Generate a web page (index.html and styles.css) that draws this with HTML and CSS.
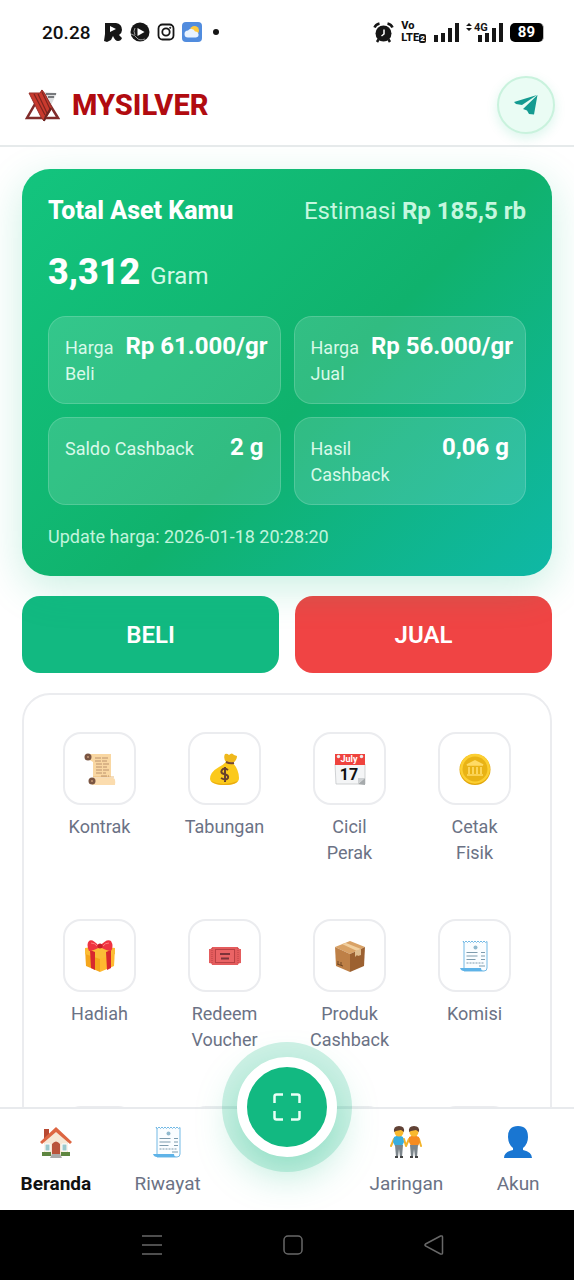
FILE: index.html
```html
<!DOCTYPE html>
<html lang="id">
<head>
  <meta charset="UTF-8" />
  <meta name="viewport" content="width=device-width, initial-scale=1.0" />
  <title>MYSILVER</title>
  <link rel="stylesheet" href="styles.css">
</head>
<body>
  <svg class="defs" aria-hidden="true">
    <symbol id="receipt" viewBox="0 0 32 32">
      <path d="M4 1l1.500 1.500L7 1l1.500 1.500L10 1l1.500 1.500L13 1l1.500 1.500L16 1l1.500 1.500L19 1l1.500 1.500L22 1l1.500 1.500L25 1l1.500 1.500L28 1.500V28q0 3-3 3H5V3z" fill="#fafdff" stroke="#72b9e5" stroke-width="1"/>
      <path d="M1 28h21q0 3 3 3H5q-3 0-4-3z" fill="#5eb3e8"/>
      <circle cx="16.500" cy="7.500" r="2" fill="#90b9ce"/>
      <path d="M7.500 12.500h11M7.500 16h11M7.500 19.500h9M22 12.500h4M22 16h4M22 19.500h4M20 26h6" stroke="#7d9bad" stroke-width="1"/>
      <path d="M7.500 23h18" stroke="#7d9bad" stroke-width="1" stroke-dasharray="2 1"/>
    </symbol>
  </svg>

  <div class="app">
    <div class="status-bar">
      <div class="status-left">
        <span class="clock">20.28</span>
        <svg width="20" height="20" viewBox="0 0 20 20"><path d="M2 1h11q6 1 6 7 0 3-3 5l3 3q-1 3-4 3-3 0-5-5l-2 4-4 2-3-1 1-7z" fill="#161616"/><path d="M7 4l6 3-6 3z" fill="#fff"/></svg>
        <svg width="20" height="20" viewBox="0 0 20 20"><circle cx="10" cy="10" r="9.500" fill="#161616"/><path d="M7.500 6l7 4-7 4z" fill="#fff"/><path d="M1 12q4 1 6 4t8 1M5 6q-2 3 0 7" fill="none" stroke="#999"/></svg>
        <svg width="18" height="18" viewBox="0 0 18 18" fill="none" stroke="#161616" stroke-width="1.800"><rect x="1.500" y="1.500" width="15" height="15" rx="4"/><circle cx="9" cy="9" r="3.700"/><circle cx="13.200" cy="4.800" r=".6" fill="#161616" stroke-width="1"/></svg>
        <svg width="20" height="20" viewBox="0 0 20 20"><rect width="20" height="20" rx="4" fill="#518cde"/><circle cx="12.500" cy="8.500" r="4.500" fill="#ffc93c"/><path d="M6 15.500a3.500 3.500 0 0 1 0-7 4 4 0 0 1 7 1 3 3 0 0 1 1 6z" fill="#e9f3ff"/></svg>
        <span class="dot"></span>
      </div>
      <div class="status-right">
        <svg width="21" height="21" viewBox="0 0 21 21"><circle cx="10.500" cy="11.500" r="8" fill="#161616"/><path d="M1.500 5.500q1-3 5-4M19.500 5.500q-1-3-5-4M5.500 17.500L4 20M15.500 17.500l1.500 2.500" fill="none" stroke="#161616" stroke-width="2.500"/><path d="M11 7.500v4.500l-2.500 2" fill="none" stroke="#fff" stroke-width="1.500"/></svg>
        <span class="volte"><span>Vo</span><span>LTE<b>2</b></span></span>
        <svg width="26" height="21" viewBox="0 0 26 21" fill="#161616"><path d="M1 13h4v7H1zM8 11h4v9H8zM15 6h4v14h-4zM22 1h4v19h-4z"/></svg>
        <svg width="37" height="21" viewBox="0 0 37 21" fill="#161616"><path d="M0 4l3-3 3 3zM0 6l3 3 3-3z"/><text class="net" x="8" y="9">4G</text><path d="M12 13h4v7h-4zM19 11h4v9h-4zM26 6h4v14h-4zM33 1h4v19h-4z"/></svg>
        <span class="battery">89</span>
      </div>
    </div>

    <header class="topbar">
      <a class="brand" href="#">
        <svg width="36" height="36" viewBox="0 0 36 36">
          <path d="M19 5l14 1-6 12-6-4z" fill="#dedfe0"/>
          <path d="M22 7h10M24 10h6" stroke="#56585b" stroke-width="1.500"/>
          <path d="M18 5L34 31H3z" fill="none" stroke="#812c2b" stroke-width="2.500"/>
          <path d="M5 6h11l2-3 3 4 7 14-8 13-3-4z" fill="#c93a2e" stroke="#96302a"/>
          <path d="M10 7l11 21M14 7l9 19M18 5l8 17" stroke="#7d241f" stroke-width="1.200"/>
          <path d="M20 34l2-5 5-8" fill="none" stroke="#6b2522" stroke-width="2"/>
        </svg>
        <span>MYSILVER</span>
      </a>
      <button class="send-btn" aria-label="Telegram">
        <svg width="24" height="20" viewBox="0 0 24 20"><path d="M23 0L0 7l2 2 6 1z" fill="#159b91"/><path d="M23.500 0L9 14l4 1.500 2 3.500 5 .5z" fill="#159b91"/></svg>
      </button>
    </header>

    <main class="content">
      <section class="asset-card">
        <div class="asset-head">
          <h1>Total Aset Kamu</h1>
          <span class="estimate">Estimasi <b>Rp 185,5 rb</b></span>
        </div>
        <div class="balance"><strong>3,312</strong><span>Gram</span></div>
        <div class="price-grid">
          <div class="price-box"><span>Harga Beli</span><b>Rp 61.000/gr</b></div>
          <div class="price-box"><span>Harga Jual</span><b>Rp 56.000/gr</b></div>
          <div class="price-box"><span>Saldo Cashback</span><b>2 g</b></div>
          <div class="price-box"><span>Hasil Cashback</span><b>0,06 g</b></div>
        </div>
        <p class="updated">Update harga: 2026-01-18 20:28:20</p>
      </section>

      <div class="actions">
        <button class="btn buy">BELI</button>
        <button class="btn sell">JUAL</button>
      </div>

      <section class="menu">
        <a class="menu-item" href="#">
          <span class="tile">
            <svg viewBox="0 0 32 32"><path d="M4 1h23v23H9V9L4 6z" fill="#f9d7a2"/><path d="M8 25h21q3 0 2 7H8z" fill="#fbdcae"/><path d="M9 24h21" stroke="#e9b979"/><circle cx="4" cy="4" r="3.500" fill="#7a5542"/><circle cx="8" cy="28" r="3.500" fill="#7a5542"/><circle cx="4" cy="4" r="1" fill="#c59876"/><circle cx="8" cy="28" r="1" fill="#c59876"/><path d="M11 5h13M11 8h12M12 11h13M12 14h11M12 17h13M12 20h10M17 23h8" stroke="#ad8060" stroke-width=".8" stroke-dasharray="6 1"/></svg>
          </span>
          <span>Kontrak</span>
        </a>
        <a class="menu-item" href="#">
          <span class="tile">
            <svg viewBox="0 0 32 32"><path d="M17 9q-3-4-1-8 2-1 4 1 3-3 5 0l3 1q0 4-4 7z" fill="#efb81b"/><path d="M17 9q4 3 7 1 6 7 6 15 0 7-14 7T1 26q0-7 9-12 4-2 7-5z" fill="#fbc91c"/><path d="M2 28q12 6 27 0-3 4-13 4T2 28z" fill="#e9aa12"/><path d="M17 9q4 2 8 1" stroke="#704537" stroke-width="2" fill="none"/><path d="M19 17q-4-3-6 0-2 3 2 4 5 1 4 4-2 3-7 0M16 14v15" stroke="#67402d" stroke-width="2" fill="none"/></svg>
          </span>
          <span>Tabungan</span>
        </a>
        <a class="menu-item" href="#">
          <span class="tile">
            <svg viewBox="0 0 32 32"><path d="M1 11h30v20H2z" fill="#f4f5f6" stroke="#c5c8ca" stroke-width=".8"/><path d="M24 31l7-6v7z" fill="#a6aaac"/><path d="M24 31v-6h7z" fill="#ced1d3"/><path d="M1 1h30v11H1z" fill="#ef433e"/><circle cx="4.500" cy="3.500" r="1.700" fill="#eee"/><circle cx="27.500" cy="3.500" r="1.700" fill="#eee"/><text class="cal-month" x="15" y="9">July</text><text class="cal-day" x="15" y="27">17</text></svg>
          </span>
          <span>Cicil Perak</span>
        </a>
        <a class="menu-item" href="#">
          <span class="tile">
            <svg viewBox="0 0 32 32"><circle cx="16" cy="16.500" r="15.500" fill="#e2a70b"/><circle cx="16" cy="15.700" r="15" fill="#fccf32"/><circle cx="16" cy="16" r="12.500" fill="#e9b315"/><path d="M8 12l8-4 8 4zM8 22h16M10 14v7M14 14v7M18 14v7M22 14v7" fill="#ffdb65" stroke="#ffdb65" stroke-width="1.700"/></svg>
          </span>
          <span>Cetak Fisik</span>
        </a>
        <a class="menu-item" href="#">
          <span class="tile">
            <svg viewBox="0 0 32 32"><path d="M1 9l15 4v19L2 26z" fill="#f5a61c"/><path d="M16 13l15-4-1 17-14 6z" fill="#ffb92f"/><path d="M1 8l14-2 16 2v6l-15 5L1 14z" fill="#fbbd36"/><path d="M6 10l5 2v18l-4-2zM22 12l5-2v18l-4 2z" fill="#d8282e"/><path d="M15 6Q8-2 5 1t0 10q4 0 11-4 7 4 11 4 3-5 0-10-4-3-11 5z" fill="#ef3340"/><circle cx="16" cy="6" r="2.500" fill="#c71e2a"/><path d="M7 3q4 0 6 3M25 3q-4 0-6 3" fill="none" stroke="#ff7b7d"/></svg>
          </span>
          <span>Hadiah</span>
        </a>
        <a class="menu-item" href="#">
          <span class="tile">
            <svg viewBox="0 0 32 32"><path d="M3 7h26q0 2 3 2v14q-3 0-3 2H3q0-2-3-2V9q3 0 3-2z" fill="#e45c5d"/><rect x="6.500" y="9.500" width="19" height="13" fill="#ea6465" stroke="#b94144"/><path d="M3 8v16M29 8v16" stroke="#ba4245" stroke-dasharray="1 1"/><path d="M11 14h10M12 18.500h8" stroke="#7d3339" stroke-width="2"/></svg>
          </span>
          <span>Redeem Voucher</span>
        </a>
        <a class="menu-item" href="#">
          <span class="tile">
            <svg viewBox="0 0 32 32"><path d="M1 7l15-6 15 6-15 7z" fill="#d9a266"/><path d="M1 7l15 7v18L2 26z" fill="#be8047"/><path d="M16 14l15-7-1 19-14 6z" fill="#9c6131"/><path d="M8 4l15 7 4-2-15-6z" fill="#f1cf9e"/><path d="M21 11l6-2v6l-3 1-1-1-2 2z" fill="#dfbd8f"/><path d="M4 21v3M7 22v3M3 24l6 2" stroke="#704624"/></svg>
          </span>
          <span>Produk Cashback</span>
        </a>
        <a class="menu-item" href="#">
          <span class="tile"><svg><use href="#receipt"/></svg></span>
          <span>Komisi</span>
        </a>
        <span class="menu-item"><span class="tile"></span></span>
        <span class="menu-item"><span class="tile"></span></span>
        <span class="menu-item"><span class="tile"></span></span>
        <span class="menu-item"><span class="tile"></span></span>
      </section>
    </main>

    <nav class="bottom-nav">
      <a class="nav-item active" href="#">
        <svg viewBox="0 0 32 32"><path d="M4 3h5v12H4z" fill="#b84932"/><path d="M4 14L16 4l12 10v16H4z" fill="#f6e7d5"/><path d="M0 16L16 1l16 15-2 2L16 6 2 18z" fill="#dd6642"/><path d="M5 18h5v7H5zM22 18h5v7h-5z" fill="#9cc8cc" stroke="#fff"/><path d="M12 29V18q4-5 8 0v11z" fill="#b9543c"/><path d="M2 26h9v4H2zM21 26h9v4h-9z" fill="#5e8640"/><path d="M12 28h8l2 4H10z" fill="#aaa"/></svg>
        <span>Beranda</span>
      </a>
      <a class="nav-item" href="#">
        <svg><use href="#receipt"/></svg>
        <span>Riwayat</span>
      </a>
      <button class="scan-btn" aria-label="Scan">
        <svg width="28" height="28" viewBox="0 0 28 28" fill="none" stroke="#e9fff6" stroke-width="2.500"><path d="M1.500 10V3.500q0-2 2-2H10M18 1.500h6.500q2 0 2 2V10M26.500 18v6.500q0 2-2 2H18M10 26.500H3.500q-2 0-2-2V18"/></svg>
      </button>
      <a class="nav-item" href="#">
        <svg viewBox="0 0 32 32"><path d="M4 13L1 20M14 13l2 7M19 13l-3 7M29 13l2 7" stroke="#f3b42b" stroke-width="2" stroke-linecap="round"/><path d="M4 11q5-3 9 0l1 5-2 4H5l-2-4z" fill="#38aedf"/><path d="M19 11q5-3 10 0l1 5-2 4h-7l-2-4z" fill="#f68b20"/><path d="M5 19h8l-1 12h-2l-1-8-1 8H6zM20 19h8l-1 12h-2l-1-8-1 8h-2z" fill="#7c858b"/><path d="M5 31h3M10 31h3M20 31h3M25 31h3" stroke="#444" stroke-width="2"/><circle cx="9" cy="6" r="4.500" fill="#f9b92e"/><circle cx="24" cy="6" r="4.500" fill="#f9b92e"/><path d="M4 6q-1-6 5-6t5 6l-3-2-5 1zM19 6q-1-6 5-6t5 6l-3-2-5 1z" fill="#614235"/></svg>
        <span>Jaringan</span>
      </a>
      <a class="nav-item" href="#">
        <svg viewBox="0 0 32 32"><path d="M16 0q10 0 10 11 0 7-5 11v2q9 2 9 8H2q0-6 9-8v-2Q6 18 6 11 6 0 16 0z" fill="#1976d2"/></svg>
        <span>Akun</span>
      </a>
    </nav>

    <div class="system-nav">
      <button aria-label="Recent"><svg width="20" height="20" viewBox="0 0 20 20"><path d="M0 1h20M0 10h20M0 19h20"/></svg></button>
      <button aria-label="Home"><svg width="20" height="20" viewBox="0 0 20 20"><rect x="1" y="1" width="18" height="18" rx="4"/></svg></button>
      <button aria-label="Back"><svg width="20" height="20" viewBox="0 0 20 20"><path d="M1.500 9L16.500 1q2-.5 2 1v16q0 1.500-2 1L1.500 11q-1-1 0-2z"/></svg></button>
    </div>
  </div>
</body>
</html>
```
FILE: styles.css
```css
* {
  box-sizing: border-box;
}

body {
  margin: 0;
  background: #fff;
  color: #111;
  font-family: Roboto, sans-serif;
}

button {
  padding: 0;
  border: none;
  font-family: inherit;
  cursor: pointer;
}

a {
  color: inherit;
  text-decoration: none;
}

svg {
  display: block;
  flex-shrink: 0;
}

.defs {
  display: none;
}

.app {
  display: flex;
  flex-direction: column;
  height: 100vh;
  overflow: hidden;
}

/* phone status bar */
.status-bar {
  display: flex;
  align-items: center;
  justify-content: space-between;
  height: 64px;
  padding: 0 30px 0 42px;
  flex-shrink: 0;
}

.status-left,
.status-right {
  display: flex;
  align-items: center;
  gap: 7px;
}

.clock {
  margin-right: 6px;
  font-size: 19px;
  font-weight: 500;
}

.dot {
  width: 6px;
  height: 6px;
  margin-left: 4px;
  border-radius: 50%;
  background: #161616;
}

.volte {
  display: flex;
  flex-direction: column;
  font-size: 11px;
  font-weight: 800;
  line-height: 12px;
}

.volte b {
  padding: 0 1px;
  border-radius: 2px;
  background: #161616;
  color: #fff;
  font-size: 8px;
}

.net {
  font-size: 11px;
  font-weight: 700;
}

.battery {
  padding: 0 8px;
  border-radius: 5px;
  border-right: 1px solid #bbb;
  background: #000;
  color: #fff;
  font-size: 15px;
  font-weight: 700;
  line-height: 19px;
}

/* header */
.topbar {
  display: flex;
  align-items: center;
  justify-content: space-between;
  height: 83px;
  padding: 0 19px 0 24px;
  border-bottom: 2px solid #e6eaeb;
  flex-shrink: 0;
}

.brand {
  display: flex;
  align-items: center;
  gap: 12px;
  color: #b10b10;
  font-size: 29px;
  font-weight: 800;
}

.send-btn {
  display: grid;
  place-items: center;
  width: 58px;
  height: 58px;
  border: 2px solid #c9f2dd;
  border-radius: 50%;
  background: #eafcf4;
  box-shadow: 0 4px 12px rgba(16, 185, 129, 0.15);
}

/* content */
.content {
  flex: 1;
  min-height: 0;
  padding: 22px 22px 0;
  overflow: hidden;
}

.asset-card {
  position: relative;
  padding: 26px;
  border-radius: 28px;
  background: linear-gradient(135deg, #13c47e 0%, #10b26d 55%, #0fb8a6 100%);
  box-shadow: 0 12px 40px rgba(16, 185, 129, 0.22);
  color: #fff;
}

.asset-head {
  display: flex;
  align-items: center;
  justify-content: space-between;
  line-height: 32px;
}

.asset-head h1 {
  margin: 0;
  font-size: 25px;
  font-weight: 800;
}

.estimate {
  color: #c5f7df;
  font-size: 24px;
}

.balance {
  display: flex;
  align-items: baseline;
  gap: 10px;
  margin: 21px 0 16px;
  line-height: 48px;
}

.balance strong {
  font-size: 36px;
  font-weight: 800;
}

.balance span {
  color: #d3f9e6;
  font-size: 24px;
}

.price-grid {
  display: grid;
  grid-template-columns: repeat(2, minmax(0, 1fr));
  gap: 13px;
}

.price-box {
  display: flex;
  align-items: baseline;
  justify-content: space-between;
  gap: 12px;
  min-height: 88px;
  padding: 16px;
  border: 1px solid rgba(255, 255, 255, 0.28);
  border-radius: 18px;
  background: rgba(255, 255, 255, 0.14);
  background-clip: padding-box;
  line-height: 26px;
}

.price-box span {
  color: #d8f9e9;
  font-size: 18px;
}

.price-box b {
  font-size: 24px;
  white-space: nowrap;
}

.updated {
  margin: 19px 0 0;
  color: #c0f4dc;
  font-size: 18px;
  line-height: 26px;
}

.actions {
  display: grid;
  grid-template-columns: 1fr 1fr;
  gap: 16px;
  margin: 20px 0;
}

.btn {
  height: 77px;
  border-radius: 18px;
  color: #fff;
  font-size: 24px;
  font-weight: 600;
}

.buy {
  background: #12b981;
}

.sell {
  background: #f04444;
}

/* menu */
.menu {
  display: grid;
  grid-template-columns: repeat(4, minmax(0, 1fr));
  gap: 53px 16px;
  padding: 37px 21px;
  border: 2px solid #ebecef;
  border-radius: 28px;
}

.menu-item {
  display: flex;
  flex-direction: column;
  align-items: center;
  gap: 9px;
  padding: 0 14px;
  color: #6b7285;
  font-size: 18px;
  line-height: 26px;
  text-align: center;
}

.tile {
  display: grid;
  place-items: center;
  width: 73px;
  height: 73px;
  border: 2px solid #ebecef;
  border-radius: 18px;
}

.tile svg,
.nav-item svg {
  width: 32px;
  height: 32px;
}

.cal-month {
  fill: #fff;
  font-size: 9px;
  font-weight: 700;
  text-anchor: middle;
}

.cal-day {
  fill: #111;
  font-size: 16px;
  font-weight: 700;
  text-anchor: middle;
}

/* bottom navigation */
.bottom-nav {
  position: relative;
  display: grid;
  grid-template-columns: 1fr 1fr 127px 1fr 1fr;
  justify-items: center;
  height: 103px;
  border-top: 2px solid #e8eaed;
  background: #fff;
  flex-shrink: 0;
}

.nav-item {
  display: flex;
  flex-direction: column;
  align-items: center;
  gap: 13px;
  padding-top: 17px;
  color: #6b7285;
  font-size: 19px;
  line-height: 26px;
}

.nav-item.active {
  color: #111;
  font-weight: 700;
}

.scan-btn {
  display: grid;
  place-items: center;
  width: 100px;
  height: 100px;
  margin-top: -52px;
  border: 10px solid #fff;
  border-radius: 50%;
  background: #12b981;
  box-shadow: 0 0 0 15px rgba(16, 185, 129, 0.2), 0 15px 40px rgba(16, 185, 129, 0.35);
}

.system-nav {
  position: relative;
  display: flex;
  align-items: center;
  justify-content: center;
  gap: 121px;
  height: 70px;
  padding-left: 12px;
  background: #000;
  flex-shrink: 0;
}

.system-nav button {
  background: none;
}

.system-nav svg {
  fill: none;
  stroke: #686868;
  stroke-width: 1.5;
}
```
